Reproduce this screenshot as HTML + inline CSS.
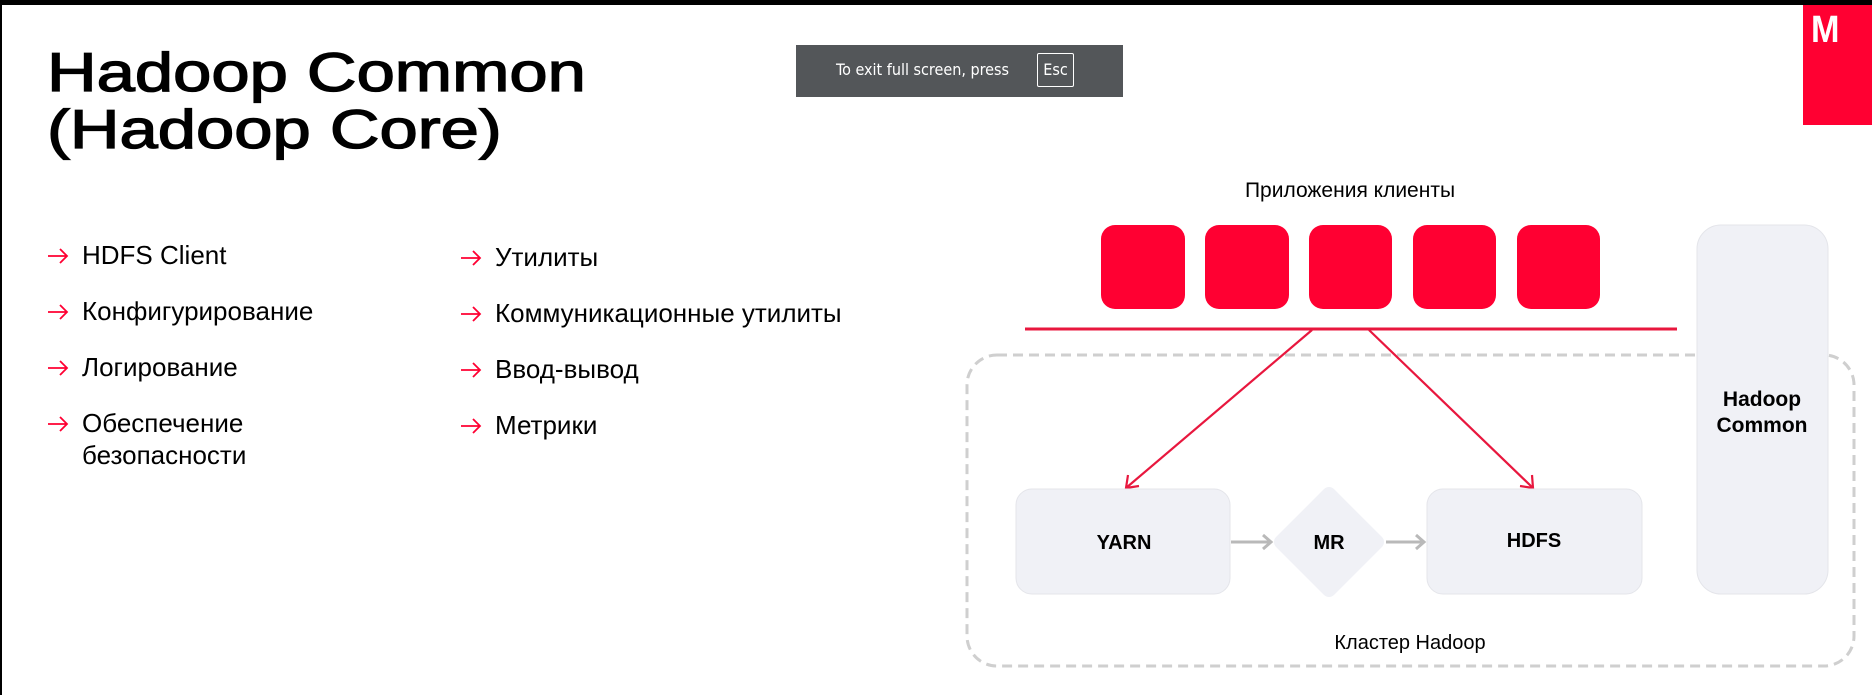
<!DOCTYPE html>
<html><head><meta charset="utf-8"><style>
html,body{margin:0;padding:0;}
body{width:1872px;height:695px;position:relative;overflow:hidden;background:#fff;font-family:"Liberation Sans","Noto Sans CJK SC",sans-serif;color:#000;}
.topbar{position:absolute;left:0;top:0;width:1872px;height:5px;background:#000;}
.leftbar{position:absolute;left:0;top:0;width:2px;height:695px;background:#000;}
.title{position:absolute;left:47px;top:44px;font-weight:normal;font-size:55px;line-height:57px;transform:scaleX(1.25);transform-origin:left top;white-space:nowrap;-webkit-text-stroke:1.3px #000;}
.esc{position:absolute;left:796px;top:45px;width:327px;height:52px;background:#535659;color:#fff;font-family:"DejaVu Sans Condensed","DejaVu Sans",sans-serif;font-size:16px;}
.esc span.t{position:absolute;left:40px;top:15px;}
.esc span.k{position:absolute;left:241px;top:8px;width:37px;height:34px;border:1px solid #fff;border-radius:2px;box-sizing:border-box;text-align:center;line-height:32px;}
.mbox{position:absolute;left:1803px;top:5px;width:69px;height:120px;background:#ff0032;color:#fff;font-weight:bold;font-size:38px;}
.mbox span{position:absolute;left:8px;top:4px;transform:scaleX(0.9);transform-origin:left top;}
.li{position:absolute;font-size:26px;line-height:32px;white-space:nowrap;}
.li svg{position:absolute;left:-35px;top:9px;}
</style></head><body>
<div class="topbar"></div><div class="leftbar"></div>
<div class="title">Hadoop Common<br>(Hadoop Core)</div>
<div class="esc"><span class="t">To exit full screen, press</span><span class="k">Esc</span></div>
<div class="mbox"><span>M</span></div>

<div class="li" style="left:82px;top:239px"><svg width="22" height="16" viewBox="0 0 22 16"><path d="M1 8H20M13 1L20 8L13 15" fill="none" stroke="#ff0032" stroke-width="1.8"/></svg>HDFS Client</div>
<div class="li" style="left:82px;top:295px"><svg width="22" height="16" viewBox="0 0 22 16"><path d="M1 8H20M13 1L20 8L13 15" fill="none" stroke="#ff0032" stroke-width="1.8"/></svg>Конфигурирование</div>
<div class="li" style="left:82px;top:351px"><svg width="22" height="16" viewBox="0 0 22 16"><path d="M1 8H20M13 1L20 8L13 15" fill="none" stroke="#ff0032" stroke-width="1.8"/></svg>Логирование</div>
<div class="li" style="left:82px;top:407px"><svg width="22" height="16" viewBox="0 0 22 16"><path d="M1 8H20M13 1L20 8L13 15" fill="none" stroke="#ff0032" stroke-width="1.8"/></svg>Обеспечение<br>безопасности</div>
<div class="li" style="left:495px;top:241px"><svg width="22" height="16" viewBox="0 0 22 16"><path d="M1 8H20M13 1L20 8L13 15" fill="none" stroke="#ff0032" stroke-width="1.8"/></svg>Утилиты</div>
<div class="li" style="left:495px;top:297px"><svg width="22" height="16" viewBox="0 0 22 16"><path d="M1 8H20M13 1L20 8L13 15" fill="none" stroke="#ff0032" stroke-width="1.8"/></svg>Коммуникационные утилиты</div>
<div class="li" style="left:495px;top:353px"><svg width="22" height="16" viewBox="0 0 22 16"><path d="M1 8H20M13 1L20 8L13 15" fill="none" stroke="#ff0032" stroke-width="1.8"/></svg>Ввод-вывод</div>
<div class="li" style="left:495px;top:409px"><svg width="22" height="16" viewBox="0 0 22 16"><path d="M1 8H20M13 1L20 8L13 15" fill="none" stroke="#ff0032" stroke-width="1.8"/></svg>Метрики</div>

<svg style="position:absolute;left:0;top:0" width="1872" height="695" viewBox="0 0 1872 695">
<rect x="967" y="355" width="887" height="311" rx="30" fill="none" stroke="#cfcfcf" stroke-width="3" stroke-dasharray="10 6"/>
<text x="1350" y="197" text-anchor="middle" font-family="Liberation Sans" font-size="21">Приложения  клиенты</text>
<g fill="#ff0032">
<rect x="1101" y="225" width="84" height="84" rx="14"/>
<rect x="1205" y="225" width="84" height="84" rx="14"/>
<rect x="1309" y="225" width="83" height="84" rx="14"/>
<rect x="1413" y="225" width="83" height="84" rx="14"/>
<rect x="1517" y="225" width="83" height="84" rx="14"/>
</g>
<line x1="1025" y1="329" x2="1677" y2="329" stroke="#e8173e" stroke-width="3"/>
<rect x="1697" y="225" width="131" height="369" rx="24" fill="#f0f1f6" stroke="#e4e5ea"/>
<text font-family="Liberation Sans" font-weight="bold" font-size="21" text-anchor="middle"><tspan x="1762" y="406">Hadoop</tspan><tspan x="1762" y="432">Common</tspan></text>
<g stroke="#e8173e" stroke-width="2.2" fill="none">
<line x1="1312" y1="330" x2="1126" y2="488"/>
<polyline points="1128,475 1126,488 1139,486"/>
<line x1="1369" y1="330" x2="1533" y2="488"/>
<polyline points="1520,486 1533,488 1532,475"/>
</g>
<rect x="1016" y="489" width="214" height="105" rx="16" fill="#f0f1f6" stroke="#e4e5ea"/>
<rect x="1427" y="489" width="215" height="105" rx="16" fill="#f0f1f6" stroke="#e4e5ea"/>
<path d="M1329,494 L1377,542 L1329,590 L1281,542 Z" fill="#f0f1f6" stroke="#f0f1f6" stroke-width="14" stroke-linejoin="round"/>
<g stroke="#b9b9b9" stroke-width="3" fill="none">
<line x1="1231" y1="542" x2="1271" y2="542"/><polyline points="1263,535 1271,542 1263,549"/>
<line x1="1386" y1="542" x2="1424" y2="542"/><polyline points="1416,535 1424,542 1416,549"/>
</g>
<g font-family="Liberation Sans" font-weight="bold" font-size="20" text-anchor="middle">
<text x="1124" y="549">YARN</text>
<text x="1329" y="549">MR</text>
<text x="1534" y="547">HDFS</text>
</g>
<text x="1410" y="649" text-anchor="middle" font-family="Liberation Sans" font-size="20">Кластер  Hadoop</text>
</svg>
</body></html>
